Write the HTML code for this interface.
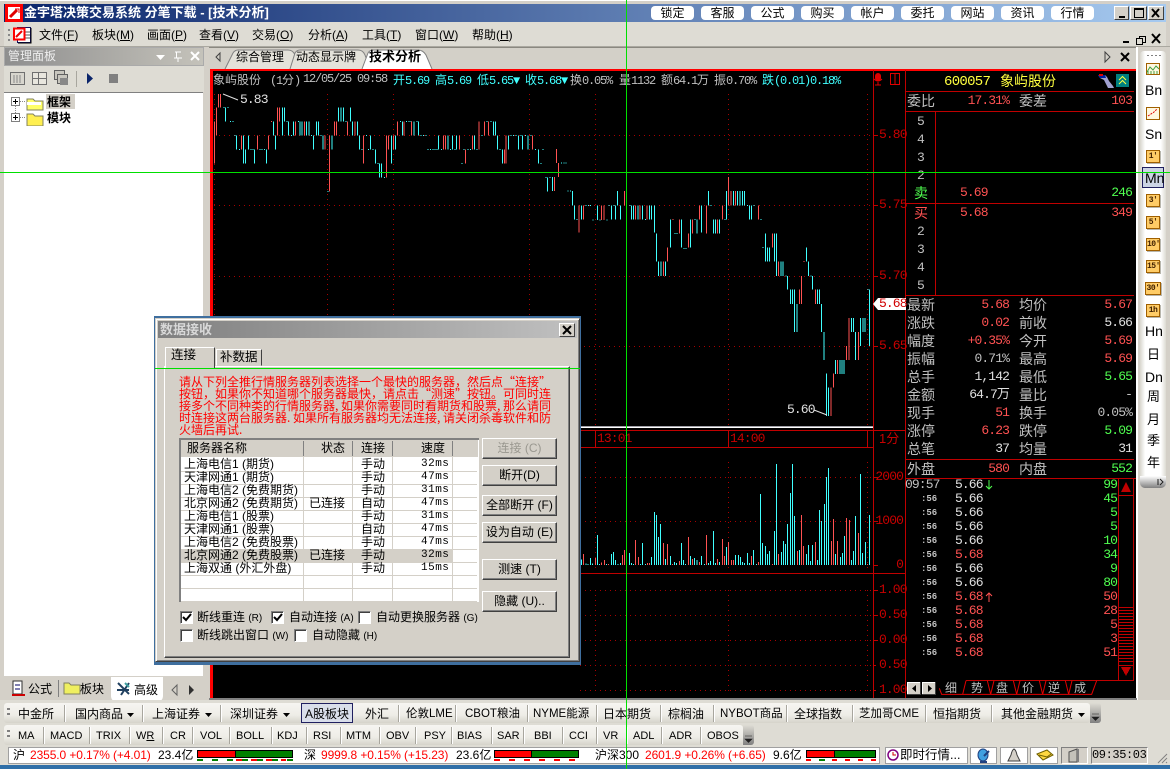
<!DOCTYPE html>
<html lang="zh"><head><meta charset="utf-8"><title>金宇塔决策交易系统</title>
<style>
html,body{margin:0;padding:0}
body{width:1170px;height:769px;position:relative;overflow:hidden;background:#d4d0c8;font:12px/14px "Liberation Sans","WenQuanYi Zen Hei","Noto Sans CJK SC",sans-serif;color:#000}
div,span.a{position:absolute}
.t{position:absolute;white-space:nowrap}
.m{font-family:"Liberation Mono","WenQuanYi Zen Hei","Noto Sans CJK SC",monospace}
.h{position:absolute;top:72px;white-space:nowrap;font:12px/15px "Liberation Mono",monospace;letter-spacing:-1.2px}
.h b{font:12px/15px "WenQuanYi Zen Hei","Noto Sans CJK SC",sans-serif;letter-spacing:0}
.p{position:absolute;white-space:nowrap;font-family:"Liberation Mono","WenQuanYi Zen Hei","Noto Sans CJK SC",monospace;font-size:13px;letter-spacing:-.9px;line-height:16px}
.cn{position:absolute;white-space:nowrap;font-size:14px;line-height:16px;color:#c0c0c0}
.r{text-align:right}
.red{color:#ff5252}.grn{color:#50ff50}.wht{color:#e0e0e0}.gry{color:#c0c0c0}.cy{color:#40ffff}
.ax{position:absolute;white-space:nowrap;color:#c80000;font-family:"Liberation Mono",monospace;font-size:13px;letter-spacing:-.9px;line-height:14px}
.tb{position:absolute;top:6px;width:43px;height:14px;background:#fff;border-radius:4px;text-align:center;font-size:12px;line-height:15px}
.win{position:absolute;top:6px;height:14px;background:#d4d0c8;border:1px solid;border-color:#fff #404040 #404040 #fff;box-sizing:border-box}
.bar{position:absolute;left:4px;background:linear-gradient(#f6f5f1,#eeede7 60%,#d5d3ca);border-radius:3px}
.sep{position:absolute;width:1px;background:#a8a69e;border-right:1px solid #fff}
.btn{position:absolute;left:482px;width:75px;height:21px;box-sizing:border-box;background:#d4d0c8;border:1px solid;border-color:#fff #404040 #404040 #fff;box-shadow:inset -1px -1px 0 #808080;text-align:center;line-height:19px;font-size:12px}
.cb{position:absolute;width:11px;height:11px;background:#fff;border:1px solid;border-color:#808080 #fff #fff #808080;box-shadow:inset 1px 1px 0 #404040;font-size:0}
.rw{position:absolute;left:181px;width:296px;height:13px;line-height:13px;border-bottom:1px solid #d4d0c8;box-sizing:content-box;font-size:12px;white-space:nowrap}
.rw span{position:absolute;top:0}
.c1{left:3px}.c2{left:128px}.c3{left:180px}.c4{left:240px;font-family:"Liberation Mono",monospace;font-size:11px;letter-spacing:.5px}
.sq{position:absolute;left:1146px;width:14px;height:13px;box-sizing:border-box;background:#ffcc66;border:1px solid #a06000;font:bold 8px/11px "Liberation Mono",monospace;color:#402000;text-align:center;letter-spacing:-.5px;box-shadow:1px 1px 0 #b8b6ad}
.sb{position:absolute;top:747px;height:17px;box-sizing:border-box;background:#fff;border:1px solid #a0a0a0}
.rt{position:absolute;left:179px;white-space:nowrap;color:#f00;font:12px/12px "WenQuanYi Zen Hei","Noto Sans CJK SC",sans-serif}
small{font-size:10px}
u{text-decoration:underline}
</style></head><body>

<!-- title bar -->
<div style="left:0;top:0;width:1170px;height:4px;background:#d4d0c8;border-top:1px solid #fff;box-sizing:border-box"></div>
<div style="left:4px;top:4px;width:1162px;height:18px;background:linear-gradient(90deg,#0a246a,#a6caf0)"></div>
<div style="left:5px;top:4px;width:18px;height:18px;background:#fd0000"></div>
<svg style="position:absolute;left:5px;top:4px" width="18" height="18"><rect x="3" y="3" width="12" height="12" fill="#fff"/><path d="M5 13L12 6" stroke="#e00000" stroke-width="3"/><path d="M10 5h4v4" stroke="#e00000" fill="none"/></svg>
<div class="t" style="left:24px;top:5px;color:#fff;font-weight:bold;font-size:13px;line-height:16px">金宇塔决策交易系统 分笔下载 - [技术分析]</div>
<div class="tb" style="left:651px">锁定</div><div class="tb" style="left:701px">客服</div><div class="tb" style="left:751px">公式</div><div class="tb" style="left:801px">购买</div><div class="tb" style="left:851px">帐户</div><div class="tb" style="left:901px">委托</div><div class="tb" style="left:951px">网站</div><div class="tb" style="left:1001px">资讯</div><div class="tb" style="left:1051px">行情</div>
<div class="win" style="left:1114px;width:15px"></div><div class="win" style="left:1130px;width:17px"></div><div class="win" style="left:1148px;width:16px"></div>
<svg style="position:absolute;left:1114px;top:6px" width="50" height="14"><path d="M5 11h6" stroke="#000" stroke-width="2"/><rect x="20.5" y="3.5" width="9" height="8" fill="none" stroke="#000"/><path d="M20 3h10" stroke="#000" stroke-width="2"/><path d="M38 3l7 8M45 3l-7 8" stroke="#000" stroke-width="2"/></svg>

<!-- menu bar -->
<div style="left:4px;top:22px;width:1162px;height:25px;background:#dedcd4"></div>
<div style="left:0;top:46px;width:1170px;height:1px;background:#aaa8a0"></div>
<svg style="position:absolute;left:0;top:22px" width="36" height="24"><path d="M8 7h2v2H8zM8 12h2v2H8zM8 17h2v2H8z" fill="#888"/><path d="M17.500 5.500h13v15h-13z" fill="#fff" stroke="#101060"/><path d="M25 10h5M25 13h5M25 16h5" stroke="#555"/><path d="M31 6v15H18" stroke="#000" fill="none"/><rect x="14" y="6.500" width="10.500" height="11" fill="#fff" stroke="#f00" stroke-width="2"/><path d="M16 15l6-6" stroke="#e00" stroke-width="2"/></svg>
<div class="t" style="left:39px;top:28px">文件(<u>F</u>)</div><div class="t" style="left:92px;top:28px">板块(<u>M</u>)</div><div class="t" style="left:147px;top:28px">画面(<u>P</u>)</div><div class="t" style="left:199px;top:28px">查看(<u>V</u>)</div><div class="t" style="left:252px;top:28px">交易(<u>O</u>)</div><div class="t" style="left:308px;top:28px">分析(<u>A</u>)</div><div class="t" style="left:362px;top:28px">工具(<u>T</u>)</div><div class="t" style="left:415px;top:28px">窗口(<u>W</u>)</div><div class="t" style="left:472px;top:28px">帮助(<u>H</u>)</div>
<svg style="position:absolute;left:1120px;top:32px" width="46" height="14"><path d="M3 10h6" stroke="#000" stroke-width="2"/><rect x="19.5" y="4.5" width="6" height="6" fill="#dedcd4" stroke="#000"/><rect x="16.5" y="6.5" width="6" height="6" fill="#dedcd4" stroke="#000"/><path d="M32 2l8 9M40 2l-8 9" stroke="#000" stroke-width="2"/></svg>

<!-- left panel -->
<div style="left:4px;top:47px;width:200px;height:19px;background:linear-gradient(90deg,#8f8f8f,#c4c2ba);border:1px solid #aaa;box-sizing:border-box"></div>
<div class="t" style="left:8px;top:49px;color:#eee;font-size:12px">管理面板</div>
<svg style="position:absolute;left:150px;top:48px" width="52" height="17"><path d="M6 7h9l-4.5 5z" fill="#fff"/><path d="M25 4h6M26.500 4v6M24 10h8M28 10v4" stroke="#fff" fill="none"/><path d="M41 4l8 8M49 4l-8 8" stroke="#fff" stroke-width="2"/></svg>
<div style="left:4px;top:66px;width:200px;height:26px;background:#dedcd4"></div>
<svg style="position:absolute;left:8px;top:68px" width="120" height="22"><rect x="2.500" y="4.500" width="14" height="12" fill="#d8d6ce" stroke="#707070"/><path d="M5 8h9M5 10h9M5 12h9M5 14h9" stroke="#888" stroke-dasharray="2 1"/><rect x="24.500" y="4.500" width="14" height="12" fill="#e8e6de" stroke="#707070"/><path d="M24 10.500h15M30.500 4v13" stroke="#707070"/><rect x="46.500" y="2.500" width="10" height="9" fill="#c8c6be" stroke="#606060"/><rect x="49.500" y="6.500" width="10" height="9" fill="#c8c6be" stroke="#606060"/><rect x="52" y="10" width="8" height="7" fill="#888"/><path d="M68.500 3v16" stroke="#a8a69e"/><path d="M79 5l6 5.500-6 5.500z" fill="#0a246a"/><rect x="101" y="6" width="9" height="9" fill="#808080"/></svg>
<div style="left:4px;top:92px;width:199px;height:584px;background:#fff;border-top:1px solid #808080;box-sizing:border-box"></div>
<svg style="position:absolute;left:10px;top:96px" width="40" height="30"><rect x="1.500" y="1.500" width="8" height="8" fill="#fff" stroke="#808080"/><path d="M3 5.500h5M5.500 3v5" stroke="#000"/><rect x="1.500" y="17.500" width="8" height="8" fill="#fff" stroke="#808080"/><path d="M3 21.500h5M5.500 19v5" stroke="#000"/><path d="M5.500 10v8M10 5.500h6M10 21.500h6" stroke="#888" stroke-dasharray="1 1"/><path d="M17 3h6l2 2h8v9H17z" fill="#ffff66" stroke="#808060"/><path d="M17 6h14v3H17z" fill="#fff"/><path d="M17 18h6l2 2h8v10H17z" fill="#ffef50" stroke="#808060"/></svg>
<div style="left:46px;top:94px;width:29px;height:15px;background:#d4d0c8"></div>
<div class="t" style="left:47px;top:95px;font-weight:bold">框架</div>
<div class="t" style="left:47px;top:111px;font-weight:bold">模块</div>
<div style="left:4px;top:676px;width:200px;height:27px;background:#d4d0c8"></div>
<svg style="position:absolute;left:10px;top:680px" width="130" height="20"><rect x="3" y="1" width="9" height="13" fill="#fff" stroke="#303030"/><path d="M2 15h13" stroke="#c00" stroke-width="2"/><path d="M5 5h5M5 9h5" stroke="#006"/><path d="M48.500 0v17" stroke="#808080"/><path d="M54 3h5l2 2h9v9H54z" fill="#efef60" stroke="#808060"/></svg>
<div class="t" style="left:28px;top:682px">公式</div><div class="t" style="left:80px;top:682px">板块</div>
<div style="left:111px;top:677px;width:52px;height:25px;background:#fff;border-radius:0 0 6px 6px"></div>
<svg style="position:absolute;left:116px;top:681px" width="16" height="16"><path d="M2 2l11 11M13 2L5 14M1 9h12" stroke="#204060" stroke-width="2"/><path d="M9 2l4 4" stroke="#40a0a0" stroke-width="2"/></svg>
<div class="t" style="left:134px;top:683px">高级</div>
<svg style="position:absolute;left:168px;top:683px" width="34" height="14"><path d="M9 2l-5 5 5 5z" fill="#d4d0c8" stroke="#606060"/><path d="M21 2l5 5-5 5z" fill="#303030"/></svg>

<!-- tab bar -->
<div style="left:209px;top:47px;width:930px;height:22px;background:#d3d0c8;border-top:1px solid #8a8880;box-sizing:border-box"></div>
<svg style="position:absolute;left:210px;top:48px" width="230" height="22"><path d="M10 5l-4 4 4 4z" fill="#d3d0c8" stroke="#404040"/>
<path d="M15 21l8-16q2-3 5-3h50q5 0 7 5l5 14" fill="#e4e2da" stroke="#808080"/><path d="M80 21l5-16q2-3 5-3h58q5 0 7 5l5 14" fill="#e4e2da" stroke="#808080"/><path d="M152 21l6-16q2-3 5-3h45q5 0 8 5l6 14" fill="#fff" stroke="#808080"/></svg>
<div class="t" style="left:236px;top:50px">综合管理</div><div class="t" style="left:296px;top:50px">动态显示牌</div><div class="t" style="left:369px;top:50px;font-weight:bold;font-size:13px">技术分析</div>
<svg style="position:absolute;left:1100px;top:50px" width="34" height="14"><path d="M5 2l5 5-5 5z" fill="#d3d0c8" stroke="#404040"/><path d="M21 3l8 8M29 3l-8 8" stroke="#000" stroke-width="2"/></svg>

<!-- black chart -->
<div style="left:210px;top:69px;width:927px;height:631px;background:#000"></div>
<svg style="position:absolute;left:0;top:0" width="1170" height="769" shape-rendering="crispEdges">
 <g stroke="#a80000" fill="none" stroke-dasharray="1 4"><path d="M214 135.500H873M214 205.500H873M214 276.500H873M214 346.500H873M580 477.500H873M580 521.500H873M580 590.500H873M580 615.500H873M580 640.500H873M580 665.500H873M580 690.500H873"/><path d="M214.500 94V427M327.500 94V427M393.500 94V427M529.500 94V427M595.500 94V427M728.500 94V427M867.500 94V427M595.500 462V572M728.500 462V572M867.500 462V572M595.500 590V695M728.500 590V695M867.500 590V695"/></g>
 <path d="M210 70H1136" stroke="#f00" stroke-width="2"/>
 <path d="M211.500 70V699" stroke="#f00" stroke-width="3"/>
 <path d="M210 698.500H905M905.500 70V699M873.500 70V699M210 430.500H905M210 447.500H873M210 573.500H905M595.500 431V447M728.500 431V447M867.500 431V447M905 91.500H1134M905 111.500H1134M935.500 112V295M905 203.500H1134M905 295.500H1134M905 459.500H1134M905 478.500H1136" stroke="#c00000" fill="none"/>
 <path d="M210 426.500H873" stroke="#a0a0a8"/><path d="M210 427.500H873" stroke="#fff"/>
 <path d="M873 135.500h5M873 205.500h5M873 276.500h5M873 346.500h5M873 477.500h5M873 521.500h5M873 565.500h5M873 590.500h5M873 615.500h5M873 640.500h5M873 665.500h3M873 690.500h3" stroke="#c00000"/>
 <!-- price bars A -->
 <g transform="translate(210 70) scale(.33333)" stroke-width="3" fill="none">
 <path stroke="#40ffff" d="M46 112V154M80 196V238M101 196V280M107 238V280M115 196V238M134 238V280M169 238V280M190 154V196M196 196V238M217 112V196M223 112V154M236 154V196M250 154V196M270 154V196M276 154V196M290 154V196M297 154V196M310 196V238M319 154V196M325 154V196M339 196V238M366 196V238M386 112V154M393 112V154M400 112V154M421 112V154M428 154V196M442 154V196M448 196V238M481 196V238M496 238V280M508 280V322M514 280V322M544 196V280M556 196V238M577 154V196M612 154V196M625 154V196M686 196V238M714 196V238M727 196V238M740 196V238M793 196V238M850 154V196M856 154V196M862 196V238M877 238V280M895 196V238M925 196V238M938 196V238M954 196V238M985 238V280M1012 322V364
 M40 112h3M53 112h3M60 154h3M67 154h3M73 196h3M87 238h3M121 238h3M128 238h3M148 238h3M155 238h3M162 238h3M229 154h3M243 196h3M264 154h3M303 196h3M331 196h3M352 364h3M406 154h3M455 238h3M468 196h3M474 238h3M488 238h3M503 280h3M522 322h3M570 154h3M588 154h3M595 154h3M602 154h3M619 154h3M632 196h3M639 196h3M646 196h3M653 238h3M660 238h3M667 238h3M674 238h3M680 238h3M693 238h3M720 238h3M734 238h3M754 280h3M760 238h3M773 238h3M780 238h3M800 238h3M814 196h3M829 154h3M842 154h3M869 238h3M902 196h3M909 196h3M916 196h3M932 196h3M945 196h3M961 196h3M975 238h3M991 280h3M998 238h3M1006 322h3M1019 322h3"/>
 <path stroke="#ff5252" d="M13 154V280M19 112V196M26 72V112M32 72V112M94 196V238M142 196V238M176 196V238M203 112V196M209 112V154M256 154V196M283 154V196M345 196V238M358 196V364M373 154V196M380 154V196M412 154V196M435 154V196M461 196V280M529 196V322M536 196V238M550 196V238M563 154V196M582 154V196M605 154V196M701 196V238M707 196V238M748 196V238M766 238V280M787 196V238M807 154V238M823 154V196M835 154V196M883 238V280M888 196V280M968 196V238M183 154h3"/>
 </g>
 <!-- price bars B -->
 <g transform="translate(550 130) scale(.33333)" stroke-width="3" fill="none">
 <path stroke="#40ffff" d="M7 141V183M67 183V226M73 226V268M94 226V268M142 226V270M184 226V268M197 226V268M203 183V226M211 226V268M245 226V268M250 226V268M264 226V268M278 226V268M298 226V268M305 226V268M313 226V308M320 310V394M326 394V438M333 394V438M346 394V438M361 268V352M394 268V352M421 268V352M441 268V310M455 226V308M475 183V226M490 268V310M497 268V310M509 268V310M529 183V268M550 183V226M563 183V226M570 183V226M577 183V226M583 183V226M598 226V268M605 226V268M646 310V394M652 352V394M658 352V394M673 310V394M679 310V438M693 394V438M699 394V438M712 438V478M721 478V522M727 478V522M733 478V522M733 522V606M741 522V606M769 352V394M775 394V438M788 438V478M802 478V522M808 478V522M814 522V606M822 606V690M829 730V858M836 772V858M857 690V732M870 690V732M876 690V732M882 690V732M904 564V606M911 564V606M917 606V690M932 564V648M939 564V606M945 564V606M958 478V648
 M33 99h3M40 99h3M47 99h3M53 183h3M60 183h3M80 268h3M107 226h3M114 226h3M120 226h3M128 270h3M148 270h3M169 270h3M175 226h3M190 226h3M238 226h3M285 268h3M374 310h3M380 310h3M400 355h3M406 355h3M434 268h3M482 226h3M523 268h3M591 226h3M611 226h3M631 268h3M638 352h3M706 438h3M782 438h3M952 478h3"/>
 <path stroke="#ff5252" d="M13 141V183M19 57V99M26 99V141M87 226V308M100 226V268M155 226V270M162 226V270M223 183V226M257 226V268M270 226V268M291 226V268M340 394V438M352 352V394M388 268V310M415 310V352M427 268V310M448 226V268M469 226V310M503 268V310M517 226V268M535 141V226M543 183V226M556 183V226M625 226V268M667 310V352M686 394V438M748 478V522M754 438V522M796 478V522M843 772V858M850 730V772M863 690V732M889 648V690M897 564V690M925 606V690M367 268h3M761 394h3"/>
 </g>
 <!-- volume -->
 <g transform="translate(580 430) scale(.33333)" stroke-width="3" fill="none">
 <path stroke="#40ffff" d="M4 405V388M18 405V400M24 405V402M31 405V384M38 405V400M52 405V315M58 405V402M80 405V402M94 405V372M100 405V366M107 405V390M114 405V402M121 405V399M148 405V369M155 405V399M160 405V402M181 405V402M187 405V339M196 405V402M214 405V381M223 405V246M229 405V255M236 405V321M241 405V282M256 405V387M271 405V378M283 405V396M289 405V399M304 405V339M310 405V390M316 405V402M331 405V378M344 405V384M351 405V390M365 405V378M373 405V402M385 405V399M392 405V393M400 405V303M406 405V399M419 405V396M440 405V351M466 405V375M475 405V375M481 405V381M488 405V396M494 405V399M502 405V369M508 405V399M521 405V360M529 405V402M542 405V192M548 405V339M556 405V348M563 405V372M568 405V363M584 405V303M589 405V102M604 405V366M610 405V333M616 405V342M622 405V282M631 405V189M637 405V102M643 405V258M658 405V360M679 405V372M685 405V345M691 405V393M697 405V345M712 405V390M718 405V240M724 405V273M733 405V222M739 405V141M745 405V114M767 405V372M781 405V381M787 405V369M794 405V318M815 405V390M820 405V363M826 405V258M841 405V132M847 405V369M856 405V336M869 405V255"/>
 <path stroke="#ff5252" d="M10 405V372M46 405V384M65 405V397M73 405V390M86 405V402M127 405V375M133 405V360M167 405V330M175 405V381M202 405V399M208 405V399M250 405V339M263 405V342M277 405V402M298 405V393M325 405V321M338 405V387M358 405V396M379 405V315M412 405V387M427 405V327M433 405V378M446 405V336M454 405V390M460 405V390M514 405V378M535 405V396M577 405V402M595 405V372M652 405V363M664 405V255M670 405V348M706 405V336M754 405V333M760 405V267M773 405V333M799 405V264M808 405V270M835 405V309M862 405V402"/>
 </g>
 <!-- right panel scrollbar -->
 <path d="M1118.500 478V680M1133.500 478V680M966 680.500H1134M1118 495.500H1134M1118 665.500H1134M1118 607.500H1134M1118 610.500H1134M1118 613.500H1134M1118 616.500H1134M1118 619.500H1134M1118 622.500H1134M1118 625.500H1134M1118 628.500H1134M1118 631.500H1134M1118 634.500H1134M1118 637.500H1134M1118 640.500H1134M1118 643.500H1134M1118 646.500H1134M1118 649.500H1134M1118 652.500H1134M1118 655.500H1134M1118 658.500H1134M1118 661.500H1134" stroke="#c00000" fill="none"/>
 <path d="M1126 482l5 10h-10zM1126 676l5-9h-10z" fill="#c00000"/>
</svg>
<svg style="position:absolute;left:0;top:0" width="1170" height="769"><g transform="translate(900 380) scale(.33333)" fill="none" stroke="#e00000" stroke-width="3"><path d="M118 925L125 943H188L198 902M188 943H272L262 902M272 943L282 902M272 943H350L340 902M350 943L360 902M350 943H428L418 902M428 943L438 902M428 943H506L496 902M506 943L516 902M506 943H575L590 902"/></g><path d="M223 94l15 6M814 410l13 5" stroke="#e0e0e0" fill="none"/><rect x="875" y="73" width="6" height="8" rx="3" fill="#e00000"/><path d="M874 79q4 4 8 0M878 82v3M875 85h6" stroke="#e00000" fill="none"/><rect x="890.500" y="73.500" width="9" height="11" fill="none" stroke="#e00000"/><path d="M895 74v10" stroke="#e00000"/></svg>

<!-- chart header -->
<div class="h gry" style="left:213px"><b>象屿股份</b></div>
<div class="h gry" style="left:270px">(1<b>分</b>)</div>
<div class="h gry" style="left:303px">12/05/25</div>
<div class="h gry" style="left:357px">09:58</div>
<div class="h cy" style="left:393px"><b>开</b>5.69</div>
<div class="h cy" style="left:435px"><b>高</b>5.69</div>
<div class="h cy" style="left:477px"><b>低</b>5.65▼</div>
<div class="h cy" style="left:525px"><b>收</b>5.68▼</div>
<div class="h gry" style="left:570px"><b>换</b>0.05%</div>
<div class="h gry" style="left:619px"><b>量</b>1132</div>
<div class="h gry" style="left:661px"><b>额</b>64.1<b>万</b></div>
<div class="h gry" style="left:714px"><b>振</b>0.70%</div>
<div class="h cy" style="left:762px"><b>跌</b>(0.01)0.18%</div>
<div class="t wht" style="left:240px;top:93px;font-family:'Liberation Mono',monospace;font-size:13px;letter-spacing:-.9px;line-height:14px">5.83</div>
<div class="t wht" style="left:787px;top:403px;font-family:'Liberation Mono',monospace;font-size:13px;letter-spacing:-.9px;line-height:14px">5.60</div>

<!-- axis labels -->
<div class="ax" style="left:879px;top:128px">5.80</div><div class="ax" style="left:879px;top:198px">5.75</div><div class="ax" style="left:879px;top:269px">5.70</div><div class="ax" style="left:879px;top:339px">5.65</div>
<svg style="position:absolute;left:873px;top:297px" width="33" height="14"><path d="M0 7l5-6h28v12H5z" fill="#fff"/></svg>
<div class="ax" style="left:879px;top:297px;color:#d00000">5.68</div>
<div class="ax" style="left:597px;top:432px">13:01</div><div class="ax" style="left:730px;top:432px">14:00</div>
<div class="t" style="left:879px;top:432px;color:#c80000;font-size:13px">1分</div>
<div class="ax r" style="left:869px;width:34px;top:470px">2000</div><div class="ax r" style="left:869px;width:34px;top:514px">1000</div><div class="ax r" style="left:869px;width:34px;top:558px">0</div>
<div class="ax" style="left:879px;top:583px">1.00</div><div class="ax" style="left:879px;top:608px">0.50</div><div class="ax" style="left:879px;top:633px">0.00</div><div class="ax" style="left:879px;top:658px">0.50</div><div class="ax" style="left:879px;top:683px">1.00</div>

<!-- right panel -->
<div class="p" style="left:944px;top:74px;color:#ffff40;font-size:14px;letter-spacing:-.7px">600057</div>
<div class="t" style="left:1000px;top:73px;color:#ffff40;font-size:14px;line-height:16px">象屿股份</div>
<svg style="position:absolute;left:1096px;top:73px" width="36" height="16"><path d="M2 2h7l2 2 2 4 4 5 1 2H12L8 7 4 5z" fill="#a0a0d0"/><path d="M2 2h7l1 3H4z" fill="#0020a0"/><path d="M3 1h4v2H3z" fill="#e00000"/><rect x="20" y="1" width="13" height="13" fill="#008080"/><path d="M23 7l3.500-3.500L30 7M23 11l3.500-3.500L30 11" stroke="#ffff40" fill="none"/></svg>
<div class="cn" style="left:907px;top:93px">委比</div><div class="p r red" style="left:949px;width:60px;top:93px">17.31%</div><div class="cn" style="left:1019px;top:93px">委差</div><div class="p r red" style="left:1072px;width:60px;top:93px">103</div>

<div class="p gry" style="left:917px;top:114px">5</div><div class="p gry" style="left:917px;top:132px">4</div><div class="p gry" style="left:917px;top:150px">3</div><div class="p gry" style="left:917px;top:168px">2</div>
<div class="cn" style="left:914px;top:185px;color:#50ff50">卖</div><div class="p red" style="left:960px;top:185px">5.69</div><div class="p r grn" style="left:1072px;width:60px;top:185px">246</div>
<div class="cn" style="left:914px;top:205px;color:#ff5252">买</div><div class="p red" style="left:960px;top:205px">5.68</div><div class="p r red" style="left:1072px;width:60px;top:205px">349</div>
<div class="p gry" style="left:917px;top:224px">2</div><div class="p gry" style="left:917px;top:242px">3</div><div class="p gry" style="left:917px;top:260px">4</div><div class="p gry" style="left:917px;top:278px">5</div>

<div class="cn" style="left:907px;top:297px">最新</div><div class="p r red" style="left:949px;width:60px;top:297px">5.68</div><div class="cn" style="left:1019px;top:297px">均价</div><div class="p r red" style="left:1072px;width:60px;top:297px">5.67</div>
<div class="cn" style="left:907px;top:315px">涨跌</div><div class="p r red" style="left:949px;width:60px;top:315px">0.02</div><div class="cn" style="left:1019px;top:315px">前收</div><div class="p r wht" style="left:1072px;width:60px;top:315px">5.66</div>
<div class="cn" style="left:907px;top:333px">幅度</div><div class="p r red" style="left:949px;width:60px;top:333px">+0.35%</div><div class="cn" style="left:1019px;top:333px">今开</div><div class="p r red" style="left:1072px;width:60px;top:333px">5.69</div>
<div class="cn" style="left:907px;top:351px">振幅</div><div class="p r gry" style="left:949px;width:60px;top:351px">0.71%</div><div class="cn" style="left:1019px;top:351px">最高</div><div class="p r red" style="left:1072px;width:60px;top:351px">5.69</div>
<div class="cn" style="left:907px;top:369px">总手</div><div class="p r wht" style="left:949px;width:60px;top:369px">1,142</div><div class="cn" style="left:1019px;top:369px">最低</div><div class="p r grn" style="left:1072px;width:60px;top:369px">5.65</div>
<div class="cn" style="left:907px;top:387px">金额</div><div class="p r wht" style="left:949px;width:60px;top:387px">64.7万</div><div class="cn" style="left:1019px;top:387px">量比</div><div class="p r gry" style="left:1072px;width:60px;top:387px">-</div>
<div class="cn" style="left:907px;top:405px">现手</div><div class="p r red" style="left:949px;width:60px;top:405px">51</div><div class="cn" style="left:1019px;top:405px">换手</div><div class="p r gry" style="left:1072px;width:60px;top:405px">0.05%</div>
<div class="cn" style="left:907px;top:423px">涨停</div><div class="p r red" style="left:949px;width:60px;top:423px">6.23</div><div class="cn" style="left:1019px;top:423px">跌停</div><div class="p r grn" style="left:1072px;width:60px;top:423px">5.09</div>
<div class="cn" style="left:907px;top:441px">总笔</div><div class="p r wht" style="left:949px;width:60px;top:441px">37</div><div class="cn" style="left:1019px;top:441px">均量</div><div class="p r wht" style="left:1072px;width:60px;top:441px">31</div>
<div class="cn" style="left:907px;top:461px">外盘</div><div class="p r red" style="left:949px;width:60px;top:461px">580</div><div class="cn" style="left:1019px;top:461px">内盘</div><div class="p r grn" style="left:1072px;width:60px;top:461px">552</div>

<!-- ticks -->
<div class="p gry" style="left:905px;top:477px">09:57</div>
<div class="p wht" style="left:955px;top:477px">5.66</div><div class="p r grn" style="left:1077px;width:40px;top:477px">99</div>
<svg style="position:absolute;left:985px;top:479px" width="8" height="12"><path d="M4 1v9M1 7l3 3 3-3" stroke="#50ff50" fill="none"/></svg>
<div class="p wht" style="left:955px;top:491px">5.66</div><div class="p r grn" style="left:1077px;width:40px;top:491px">45</div>
<div class="p wht" style="left:955px;top:505px">5.66</div><div class="p r grn" style="left:1077px;width:40px;top:505px">5</div>
<div class="p wht" style="left:955px;top:519px">5.66</div><div class="p r grn" style="left:1077px;width:40px;top:519px">5</div>
<div class="p wht" style="left:955px;top:533px">5.66</div><div class="p r grn" style="left:1077px;width:40px;top:533px">10</div>
<div class="p red" style="left:955px;top:547px">5.68</div><div class="p r grn" style="left:1077px;width:40px;top:547px">34</div>
<div class="p wht" style="left:955px;top:561px">5.66</div><div class="p r grn" style="left:1077px;width:40px;top:561px">9</div>
<div class="p wht" style="left:955px;top:575px">5.66</div><div class="p r grn" style="left:1077px;width:40px;top:575px">80</div>
<div class="p red" style="left:955px;top:589px">5.68</div><div class="p r red" style="left:1077px;width:40px;top:589px">50</div>
<svg style="position:absolute;left:985px;top:591px" width="8" height="12"><path d="M4 11V2M1 5l3-3 3 3" stroke="#ff5252" fill="none"/></svg>
<div class="p red" style="left:955px;top:603px">5.68</div><div class="p r red" style="left:1077px;width:40px;top:603px">28</div>
<div class="p red" style="left:955px;top:617px">5.68</div><div class="p r red" style="left:1077px;width:40px;top:617px">5</div>
<div class="p red" style="left:955px;top:631px">5.68</div><div class="p r red" style="left:1077px;width:40px;top:631px">3</div>
<div class="p red" style="left:955px;top:645px">5.68</div><div class="p r red" style="left:1077px;width:40px;top:645px">51</div>
<div class="t gry" style="left:921px;top:492px;font:bold 9px/14px 'Liberation Mono',monospace">:56</div><div class="t gry" style="left:921px;top:506px;font:bold 9px/14px 'Liberation Mono',monospace">:56</div><div class="t gry" style="left:921px;top:520px;font:bold 9px/14px 'Liberation Mono',monospace">:56</div><div class="t gry" style="left:921px;top:534px;font:bold 9px/14px 'Liberation Mono',monospace">:56</div><div class="t gry" style="left:921px;top:548px;font:bold 9px/14px 'Liberation Mono',monospace">:56</div><div class="t gry" style="left:921px;top:562px;font:bold 9px/14px 'Liberation Mono',monospace">:56</div><div class="t gry" style="left:921px;top:576px;font:bold 9px/14px 'Liberation Mono',monospace">:56</div><div class="t gry" style="left:921px;top:590px;font:bold 9px/14px 'Liberation Mono',monospace">:56</div><div class="t gry" style="left:921px;top:604px;font:bold 9px/14px 'Liberation Mono',monospace">:56</div><div class="t gry" style="left:921px;top:618px;font:bold 9px/14px 'Liberation Mono',monospace">:56</div><div class="t gry" style="left:921px;top:632px;font:bold 9px/14px 'Liberation Mono',monospace">:56</div><div class="t gry" style="left:921px;top:646px;font:bold 9px/14px 'Liberation Mono',monospace">:56</div>

<!-- panel bottom tabs -->
<div style="left:907px;top:682px;width:14px;height:13px;background:#d4d0c8;box-shadow:inset -1px -1px 0 #404040,inset 1px 1px 0 #fff"></div><div style="left:922px;top:682px;width:14px;height:13px;background:#d4d0c8;box-shadow:inset -1px -1px 0 #404040,inset 1px 1px 0 #fff"></div>
<svg style="position:absolute;left:907px;top:682px" width="30" height="13"><path d="M9 3l-4 3.500 4 3.500zM21 3l4 3.500-4 3.500z" fill="#000"/></svg>
<div class="t gry" style="left:945px;top:681px">细</div><div class="t gry" style="left:971px;top:681px">势</div><div class="t gry" style="left:996px;top:681px">盘</div><div class="t gry" style="left:1022px;top:681px">价</div><div class="t gry" style="left:1048px;top:681px">逆</div><div class="t gry" style="left:1074px;top:681px">成</div>

<!-- right toolbar -->
<div style="left:1137px;top:47px;width:33px;height:653px;background:#d4d0c8"></div>
<div style="left:1136px;top:47px;width:2px;height:653px;background:#fff"></div>
<div style="left:1140px;top:51px;width:26px;height:426px;background:linear-gradient(90deg,#d8d6ce,#fff 20%,#fff 80%,#dcdad2);border-radius:4px 4px 0 0"></div>
<div style="left:1140px;top:476px;width:26px;height:12px;background:linear-gradient(#fff,#808080);border-radius:0 0 5px 5px"></div>
<svg style="position:absolute;left:1140px;top:476px" width="26" height="12"><path d="M18 3v6M20 3l3 3-3 3" stroke="#202020" fill="none"/></svg>
<svg style="position:absolute;left:1141px;top:52px" width="24" height="70"><path d="M6 3.500h2M10 3.500h2M14 3.500h2M18 3.500h2" stroke="#808080"/><rect x="5.500" y="11.500" width="13" height="11" fill="#fff8e0" stroke="#a06000"/><path d="M6 20l3-5 3 3 3-4 3 3M7 22v-3M10 22v-3M13 22v-3M16 22v-3" stroke="#40a040" fill="none"/><rect x="5.500" y="55.500" width="13" height="12" fill="#fff8e0" stroke="#a06000"/><path d="M7 64l3-2 3-2 3-3" stroke="#e00000" stroke-dasharray="2 1" fill="none"/></svg>
<div class="t" style="left:1145px;top:82px;font-size:14px;line-height:16px">Bn</div>
<div class="t" style="left:1145px;top:126px;font-size:14px;line-height:16px">Sn</div>
<div class="sq" style="top:150px">1'</div>
<div style="left:1142px;top:167px;width:22px;height:21px;background:#ccd4e4;border:1px solid #202060;box-sizing:border-box"></div>
<div class="t" style="left:1145px;top:170px;font-size:14px;line-height:16px">Mn</div>
<div class="sq" style="top:194px">3'</div><div class="sq" style="top:216px">5'</div><div class="sq" style="top:238px">10'</div><div class="sq" style="top:260px">15'</div><div class="sq" style="left:1145px;top:282px;width:16px">30'</div><div class="sq" style="top:304px">1h</div>
<div class="t" style="left:1145px;top:323px;font-size:14px;line-height:16px">Hn</div>
<div class="t" style="left:1147px;top:347px;font-size:13px;line-height:16px">日</div>
<div class="t" style="left:1145px;top:369px;font-size:14px;line-height:16px">Dn</div>
<div class="t" style="left:1147px;top:389px;font-size:13px;line-height:16px">周</div><div class="t" style="left:1147px;top:412px;font-size:13px;line-height:16px">月</div><div class="t" style="left:1147px;top:433px;font-size:13px;line-height:16px">季</div><div class="t" style="left:1147px;top:455px;font-size:13px;line-height:16px">年</div>

<!-- bottom toolbars -->
<div style="left:0;top:700px;width:1170px;height:69px;background:#dedcd4"></div>
<div style="left:209px;top:698px;width:928px;height:2px;background:#808080"></div>
<div class="bar" style="top:703px;width:1086px;height:20px"></div>
<div class="bar" style="top:725px;width:739px;height:20px"></div>
<div style="left:1090px;top:703px;width:11px;height:20px;background:linear-gradient(#dedcd4,#808080);border-radius:0 3px 3px 0"></div>
<div style="left:743px;top:725px;width:11px;height:20px;background:linear-gradient(#dedcd4,#808080);border-radius:0 3px 3px 0"></div>
<svg style="position:absolute;left:0;top:703px" width="1170" height="43"><path d="M1092 11h7M1092 14h7l-3.500 3.500zM745 33h7M745 36h7l-3.500 3.500z" fill="#202020" stroke="#202020" stroke-width=".6"/><path d="M7 6h3M7 11h3M7 28h3M7 33h3" stroke="#808080" stroke-width="2"/><path d="M127 10h7l-3.500 4zM205 10h7l-3.500 4zM283 10h7l-3.500 4zM1078 10h7l-3.500 4z" fill="#000"/></svg>
<div style="left:301px;top:703px;width:52px;height:20px;background:#d9deea;border:1px solid #202060;box-sizing:border-box"></div>
<div class="sep" style="left:64px;top:705px;height:17px"></div><div class="sep" style="left:142px;top:705px;height:17px"></div><div class="sep" style="left:220px;top:705px;height:17px"></div><div class="sep" style="left:398px;top:705px;height:17px"></div><div class="sep" style="left:455px;top:705px;height:17px"></div><div class="sep" style="left:527px;top:705px;height:17px"></div><div class="sep" style="left:596px;top:705px;height:17px"></div><div class="sep" style="left:660px;top:705px;height:17px"></div><div class="sep" style="left:713px;top:705px;height:17px"></div><div class="sep" style="left:786px;top:705px;height:17px"></div><div class="sep" style="left:852px;top:705px;height:17px"></div><div class="sep" style="left:925px;top:705px;height:17px"></div><div class="sep" style="left:991px;top:705px;height:17px"></div>
<div class="t" style="left:18px;top:707px">中金所</div><div class="t" style="left:75px;top:707px">国内商品</div><div class="t" style="left:152px;top:707px">上海证券</div><div class="t" style="left:230px;top:707px">深圳证券</div><div class="t" style="left:305px;top:707px">A股板块</div><div class="t" style="left:365px;top:707px">外汇</div><div class="t" style="left:406px;top:707px;font-size:11.500px">伦敦LME</div><div class="t" style="left:465px;top:707px;font-size:11.500px">CBOT粮油</div><div class="t" style="left:533px;top:707px;font-size:11.500px">NYME能源</div><div class="t" style="left:603px;top:707px">日本期货</div><div class="t" style="left:668px;top:707px">棕榈油</div><div class="t" style="left:720px;top:707px;font-size:11.500px">NYBOT商品</div><div class="t" style="left:794px;top:707px">全球指数</div><div class="t" style="left:859px;top:707px;font-size:11.500px">芝加哥CME</div><div class="t" style="left:933px;top:707px">恒指期货</div><div class="t" style="left:1001px;top:707px">其他金融期货</div>
<div class="sep" style="left:43px;top:727px;height:17px"></div><div class="sep" style="left:89px;top:727px;height:17px"></div><div class="sep" style="left:129px;top:727px;height:17px"></div><div class="sep" style="left:162px;top:727px;height:17px"></div><div class="sep" style="left:192px;top:727px;height:17px"></div><div class="sep" style="left:229px;top:727px;height:17px"></div><div class="sep" style="left:271px;top:727px;height:17px"></div><div class="sep" style="left:306px;top:727px;height:17px"></div><div class="sep" style="left:340px;top:727px;height:17px"></div><div class="sep" style="left:379px;top:727px;height:17px"></div><div class="sep" style="left:415px;top:727px;height:17px"></div><div class="sep" style="left:451px;top:727px;height:17px"></div><div class="sep" style="left:491px;top:727px;height:17px"></div><div class="sep" style="left:523px;top:727px;height:17px"></div><div class="sep" style="left:562px;top:727px;height:17px"></div><div class="sep" style="left:596px;top:727px;height:17px"></div><div class="sep" style="left:626px;top:727px;height:17px"></div><div class="sep" style="left:661px;top:727px;height:17px"></div><div class="sep" style="left:700px;top:727px;height:17px"></div>
<div class="t" style="left:18px;top:729px;font-size:11px">MA</div><div class="t" style="left:50px;top:729px;font-size:11px">MACD</div><div class="t" style="left:96px;top:729px;font-size:11px">TRIX</div><div class="t" style="left:136px;top:729px;font-size:11px">W<u>R</u></div><div class="t" style="left:170px;top:729px;font-size:11px">CR</div><div class="t" style="left:200px;top:729px;font-size:11px">VOL</div><div class="t" style="left:236px;top:729px;font-size:11px">BOLL</div><div class="t" style="left:277px;top:729px;font-size:11px">KDJ</div><div class="t" style="left:313px;top:729px;font-size:11px">RSI</div><div class="t" style="left:346px;top:729px;font-size:11px">MTM</div><div class="t" style="left:386px;top:729px;font-size:11px">OBV</div><div class="t" style="left:424px;top:729px;font-size:11px">PSY</div><div class="t" style="left:457px;top:729px;font-size:11px">BIAS</div><div class="t" style="left:497px;top:729px;font-size:11px">SAR</div><div class="t" style="left:534px;top:729px;font-size:11px">BBI</div><div class="t" style="left:569px;top:729px;font-size:11px">CCI</div><div class="t" style="left:603px;top:729px;font-size:11px">VR</div><div class="t" style="left:633px;top:729px;font-size:11px">ADL</div><div class="t" style="left:669px;top:729px;font-size:11px">ADR</div><div class="t" style="left:707px;top:729px;font-size:11px">OBOS</div>

<!-- status -->
<div class="sb" style="left:8px;width:872px"></div>
<div class="t" style="left:13px;top:748px">沪</div><div class="t" style="left:30px;top:748px;color:#f00;letter-spacing:-.1px">2355.0 +0.17% (+4.01)</div><div class="t" style="left:158px;top:748px">23.4亿</div>
<div class="t" style="left:304px;top:748px">深</div><div class="t" style="left:321px;top:748px;color:#f00;letter-spacing:-.1px">9999.8 +0.15% (+15.23)</div><div class="t" style="left:456px;top:748px">23.6亿</div>
<div class="t" style="left:595px;top:748px">沪深300</div><div class="t" style="left:645px;top:748px;color:#f00;letter-spacing:-.1px">2601.9 +0.26% (+6.65)</div><div class="t" style="left:773px;top:748px">9.6亿</div>
<svg style="position:absolute;left:0;top:749px" width="900" height="14"><g stroke="#000"><rect x="197.500" y="1.500" width="38" height="7" fill="#f00"/><rect x="235.500" y="1.500" width="57" height="7" fill="#008000"/><rect x="494.500" y="1.500" width="37" height="7" fill="#f00"/><rect x="531.500" y="1.500" width="47" height="7" fill="#008000"/><rect x="806.500" y="1.500" width="28" height="7" fill="#f00"/><rect x="834.500" y="1.500" width="41" height="7" fill="#008000"/></g><path d="M197 11h97" stroke="#008000" stroke-width="2" stroke-dasharray="6 9"/><path d="M236 11h50" stroke="#f00" stroke-width="2" stroke-dasharray="6 9"/><path d="M494 11h85" stroke="#f00" stroke-width="2" stroke-dasharray="6 9"/><path d="M806 11h70" stroke="#f00" stroke-width="2" stroke-dasharray="5 8"/><path d="M819 11h6" stroke="#008000" stroke-width="2"/></svg>
<div class="sb" style="left:885px;width:83px"></div>
<svg style="position:absolute;left:886px;top:748px" width="14" height="14"><circle cx="7" cy="7" r="5" fill="#fff" stroke="#800080" stroke-width="1.500"/><path d="M7 4v3h3" stroke="#c00" fill="none"/></svg>
<div class="t" style="left:900px;top:748px;font-size:12.500px">即时行情...</div>
<div class="sb" style="left:970px;width:27px"></div>
<svg style="position:absolute;left:975px;top:748px" width="18" height="16"><ellipse cx="8" cy="7" rx="5" ry="6" fill="#40a0e0" stroke="#204080"/><path d="M5 14h7M9 8l5-5" stroke="#204080" stroke-width="2"/></svg>
<div class="sb" style="left:1000px;width:28px"></div>
<svg style="position:absolute;left:1005px;top:748px" width="18" height="16"><path d="M9 1q-2 1-3 6l-3 6h12l-3-6q-1-5-3-6z" fill="#d4d0c8" stroke="#404040"/></svg>
<div class="sb" style="left:1030px;width:28px"></div>
<svg style="position:absolute;left:1036px;top:749px" width="18" height="14"><path d="M1 5l10-4 6 5-10 5z" fill="#ffd840" stroke="#706000"/><path d="M3 6l8 2 4-3" stroke="#706000" fill="none"/></svg>
<div class="sb" style="left:1061px;width:27px;background:#d4d0c8;border-color:#808080 #fff #fff #808080"></div>
<svg style="position:absolute;left:1066px;top:748px" width="16" height="16"><path d="M3 4l8-3v13H3z" fill="#c4c2ba" stroke="#505050"/><path d="M11 1h2v13h-2z" fill="#808080"/></svg>
<div class="sb" style="left:1091px;width:57px;background:#d4d0c8;border-color:#808080 #fff #fff #808080"></div>
<div class="t m" style="left:1092px;top:748px;font-size:12px;letter-spacing:-.4px">09:35:03</div>
<svg style="position:absolute;left:1156px;top:752px" width="12" height="12"><path d="M11 2L2 11M11 6l-5 5M11 10l-1 1" stroke="#808080"/></svg>
<div style="left:0;top:765px;width:1170px;height:4px;background:#2f6fa8"></div>

<!-- dialog -->
<div style="left:154px;top:316px;width:427px;height:349px;background:#3f6f9f"></div>
<div style="left:155px;top:318px;width:425px;height:344px;background:#d4d0c8;box-sizing:border-box;border:1px solid;border-color:#d4d0c8 #404040 #404040 #d4d0c8;box-shadow:inset 1px 1px 0 #fff,inset -1px -1px 0 #808080"></div>
<div style="left:158px;top:321px;width:419px;height:17px;background:linear-gradient(90deg,#808080,#c0c0c0)"></div>
<div class="t" style="left:160px;top:322px;color:#d8d8d8;font-weight:bold;font-size:13px;line-height:15px">数据接收</div>
<div class="win" style="left:559px;top:323px;width:16px;height:14px"></div>
<svg style="position:absolute;left:559px;top:323px" width="16" height="14"><path d="M4 3l8 8M12 3l-8 8" stroke="#000" stroke-width="2"/></svg>
<div style="left:164px;top:366px;width:406px;height:292px;box-sizing:border-box;border:1px solid;border-color:#fff #404040 #404040 #fff;box-shadow:inset -1px -1px 0 #808080"></div>
<div style="left:216px;top:349px;width:46px;height:17px;box-sizing:border-box;border:1px solid;border-color:#fff #404040 transparent #fff;background:#d4d0c8"></div>
<div style="left:165px;top:347px;width:50px;height:21px;box-sizing:border-box;border-left:1px solid #fff;border-top:1px solid #fff;border-right:1px solid #404040;background:#d4d0c8"></div>
<div class="t" style="left:171px;top:348px;font-size:12.500px">连接</div><div class="t" style="left:220px;top:350px;font-size:12.500px">补数据</div>
<div style="left:155px;top:368px;width:425px;height:1px;background:#00e000"></div>

<div class="rt" style="top:376px">请从下列全推行情服务器列表选择一个最快的服务器，然后点“连接”</div>
<div class="rt" style="top:388px">按钮，如果你不知道哪个服务器最快，请点击“测速”按钮。可同时连</div>
<div class="rt" style="top:400px">接多个不同种类的行情服务器, 如果你需要同时看期货和股票, 那么请同</div>
<div class="rt" style="top:412px">时连接这两台服务器. 如果所有服务器均无法连接, 请关闭杀毒软件和防</div>
<div class="rt" style="top:424px">火墙后再试.</div>

<!-- list -->
<div style="left:179px;top:438px;width:300px;height:164px;background:#fff;border-left:2px solid #808080;border-top:2px solid #808080;box-sizing:border-box"></div>
<div style="left:181px;top:440px;width:297px;height:17px;background:#d4d0c8"></div>
<div class="t" style="left:187px;top:441px;font-size:12px">服务器名称</div><div class="t" style="left:321px;top:441px;font-size:12px">状态</div><div class="t" style="left:361px;top:441px;font-size:12px">连接</div><div class="t" style="left:421px;top:441px;font-size:12px">速度</div>
<div style="left:303px;top:441px;width:1px;height:160px;background:#d4d0c8"></div><div style="left:352px;top:441px;width:1px;height:160px;background:#d4d0c8"></div><div style="left:392px;top:441px;width:1px;height:160px;background:#d4d0c8"></div><div style="left:452px;top:441px;width:1px;height:160px;background:#d4d0c8"></div>
<div style="left:303px;top:441px;width:1px;height:15px;background:#808080"></div><div style="left:352px;top:441px;width:1px;height:15px;background:#808080"></div><div style="left:392px;top:441px;width:1px;height:15px;background:#808080"></div><div style="left:452px;top:441px;width:1px;height:15px;background:#808080"></div>
<div class="rw" style="top:458px"><span class="c1">上海电信1 (期货)</span><span class="c3">手动</span><span class="c4">32ms</span></div>
<div class="rw" style="top:471px"><span class="c1">天津网通1 (期货)</span><span class="c3">手动</span><span class="c4">47ms</span></div>
<div class="rw" style="top:484px"><span class="c1">上海电信2 (免费期货)</span><span class="c3">手动</span><span class="c4">31ms</span></div>
<div class="rw" style="top:497px"><span class="c1">北京网通2 (免费期货)</span><span class="c2">已连接</span><span class="c3">自动</span><span class="c4">47ms</span></div>
<div class="rw" style="top:510px"><span class="c1">上海电信1 (股票)</span><span class="c3">手动</span><span class="c4">31ms</span></div>
<div class="rw" style="top:523px"><span class="c1">天津网通1 (股票)</span><span class="c3">自动</span><span class="c4">47ms</span></div>
<div class="rw" style="top:536px"><span class="c1">上海电信2 (免费股票)</span><span class="c3">手动</span><span class="c4">47ms</span></div>
<div style="left:181px;top:549px;width:271px;height:13px;background:#d4d0c8"></div>
<div class="rw" style="top:549px"><span class="c1">北京网通2 (免费股票)</span><span class="c2">已连接</span><span class="c3">手动</span><span class="c4">32ms</span></div>
<div class="rw" style="top:562px"><span class="c1">上海双通 (外汇外盘)</span><span class="c3">手动</span><span class="c4">15ms</span></div>
<div class="rw" style="top:575px"></div><div class="rw" style="top:588px"></div>

<div class="btn" style="top:438px;color:#9a9890;height:21px">连接 (C)</div>
<div class="btn" style="top:465px">断开(D)</div>
<div class="btn" style="top:495px">全部断开 (F)</div>
<div class="btn" style="top:522px">设为自动 (E)</div>
<div class="btn" style="top:559px">测速 (T)</div>
<div class="btn" style="top:591px">隐藏 (U)..</div>

<div class="cb" style="left:180px;top:611px"></div><div class="cb" style="left:271px;top:611px"></div><div class="cb" style="left:358px;top:611px"></div><div class="cb" style="left:180px;top:629px"></div><div class="cb" style="left:294px;top:629px"></div>
<svg style="position:absolute;left:180px;top:611px" width="110" height="13"><path d="M3 6l3 3 5-6M94 6l3 3 5-6" stroke="#000" stroke-width="2" fill="none"/></svg>
<div class="t" style="left:197px;top:610px;font-size:12px">断线重连 <small>(R)</small></div><div class="t" style="left:289px;top:610px;font-size:12px">自动连接 <small>(A)</small></div><div class="t" style="left:376px;top:610px;font-size:12px">自动更换服务器 <small>(G)</small></div>
<div class="t" style="left:197px;top:628px;font-size:12px">断线跳出窗口 <small>(W)</small></div><div class="t" style="left:312px;top:628px;font-size:12px">自动隐藏 <small>(H)</small></div>

<!-- crosshair -->
<div style="left:0;top:172px;width:1170px;height:1px;background:#00e000;z-index:50"></div>
<div style="left:626px;top:0;width:1px;height:769px;background:#00e000;z-index:50"></div>
</body></html>
